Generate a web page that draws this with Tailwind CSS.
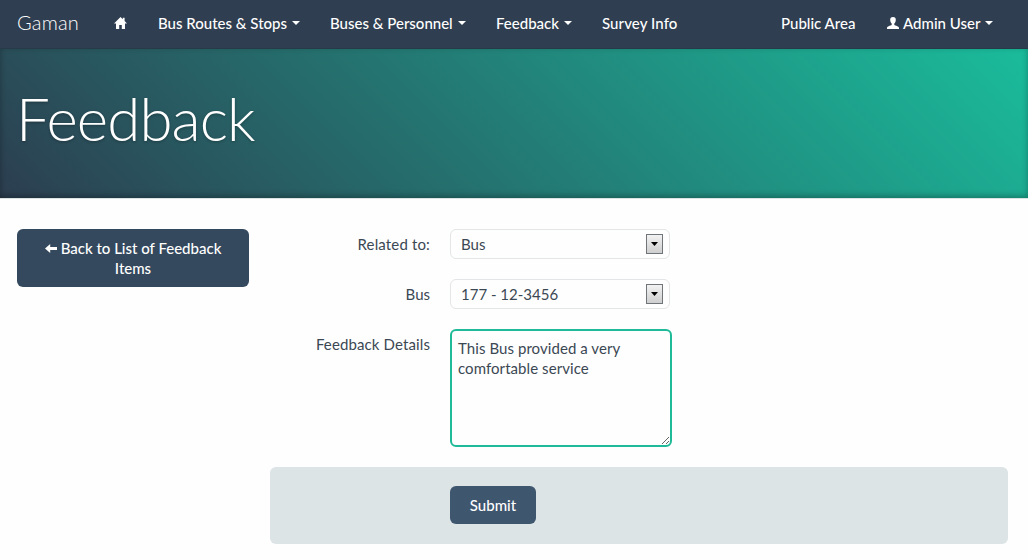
<!DOCTYPE html>
<html lang="en">
<head>
<meta charset="utf-8">
<title>Gaman - Feedback</title>
<script src="https://cdn.jsdelivr.net/npm/@tailwindcss/browser@4"></script>
</head>
<body class="bg-[#fefefe] font-['Lato',sans-serif] text-[15px] leading-5 text-[#3b4854] h-[560px] overflow-hidden">
<nav class="h-[49px] bg-[#2f3e50] border-b border-[#273a48] flex items-center text-white font-medium whitespace-nowrap">
  <a class="w-[97px] pl-[17px] text-[20px] font-light tracking-[0.2px] pb-[4px]">Gaman</a>
  <a class="w-[61px] pl-[17px] pb-[2px]">
    <svg class="w-[13px] h-[12px]" viewBox="0 0 13 12" fill="#fff"><path d="M6.5 0 0 6.600h2V12h3.200V8h2.600v4H11V6.600h2L10.600 4V.8H8.800v1.500z"/></svg>
  </a>
  <a class="w-[172px] flex items-center gap-[5px] pb-[3px]">Bus Routes &amp; Stops<span class="border-x-4 border-x-transparent border-t-4 border-t-white"></span></a>
  <a class="w-[166px] flex items-center gap-[5px] pb-[3px]">Buses &amp; Personnel<span class="border-x-4 border-x-transparent border-t-4 border-t-white"></span></a>
  <a class="w-[106px] flex items-center gap-[5px] pb-[3px]">Feedback<span class="border-x-4 border-x-transparent border-t-4 border-t-white"></span></a>
  <a class="w-[179px] pb-[3px] tracking-[0.1px]">Survey Info</a>
  <a class="w-[106px] pb-[3px]">Public Area</a>
  <a class="flex items-center pb-[3px]">
    <svg class="w-[12px] h-[12px] mr-[4px]" viewBox="0 0 12 12" fill="#fff"><path d="M6 0C4.100 0 3 1.200 3.200 3.200 3.300 4.700 4 6 4.700 6.600v1.300C3.500 8.800.2 9 0 10.800V12h12v-1.200C11.800 9 8.500 8.800 7.300 7.900V6.600C8 6 8.700 4.700 8.800 3.200 9 1.200 7.900 0 6 0z"/></svg>
    Admin User<span class="ml-[5px] border-x-4 border-x-transparent border-t-4 border-t-white"></span></a>
</nav>
<header class="h-[149px] bg-[linear-gradient(45deg,#2c3e50_0%,#1abc9c_100%)] shadow-[inset_0_-2px_6px_rgba(0,0,0,0.3),0_1px_0_#dbe3e3] pl-[16px] pt-[39px]">
  <h1 class="text-[60px] leading-[60px] font-light tracking-[-0.9px] text-white [text-shadow:0_1px_3px_rgba(0,0,0,.3)]">Feedback</h1>
</header>
<main class="flex pt-[31px] pl-[17px]">
  <aside class="w-[253px]">
    <a class="block w-[232px] h-[58px] rounded-[6px] bg-[#34495e] text-white font-medium text-center pt-[9px]"><svg class="inline w-[12px] h-[9px] mr-[4px] -mt-[3px]" viewBox="0 0 12 9" fill="#fff"><path d="M0 4.500 5.200 0v3H12v3H5.200v3z"/></svg>Back to List of Feedback<br>Items</a>
  </aside>
  <form class="w-[738px]">
    <div class="flex h-[50px]">
      <label class="w-[160px] text-right pt-[5px] mr-[20px] tracking-[0.15px]">Related to:</label>
      <div class="w-[220px] h-[30px] border border-[#e3e6e6] rounded-[6px] flex items-center justify-between pl-[10px] pr-[6px]"><span>Bus</span>
        <span class="w-[17px] h-[20px] border border-[#70757a] bg-linear-to-b from-[#f2f2f2] to-[#cfcfcf] flex items-center justify-center"><svg class="w-[7px] h-[4px]" viewBox="0 0 7 4"><path d="M0 0h7L3.500 4z"/></svg></span></div>
    </div>
    <div class="flex h-[50px]">
      <label class="w-[160px] text-right pt-[5px] mr-[20px]">Bus</label>
      <div class="w-[220px] h-[30px] border border-[#e3e6e6] rounded-[6px] flex items-center justify-between pl-[10px] pr-[6px]"><span>177 - 12-3456</span>
        <span class="w-[17px] h-[20px] border border-[#70757a] bg-linear-to-b from-[#f2f2f2] to-[#cfcfcf] flex items-center justify-center"><svg class="w-[7px] h-[4px]" viewBox="0 0 7 4"><path d="M0 0h7L3.500 4z"/></svg></span></div>
    </div>
    <div class="flex h-[138px]">
      <label class="w-[160px] text-right pt-[5px] mr-[20px] tracking-[0.12px]">Feedback Details</label>
      <div class="relative w-[222px] h-[118px] border-2 border-[#1fba98] rounded-[6px] pl-[6px] pt-[7px] tracking-[0.07px]">This Bus provided a very<br>comfortable service
        <svg class="absolute right-0 bottom-0 w-[9px] h-[9px]" viewBox="0 0 9 9" stroke="#666" stroke-width="1" fill="none"><path d="M1 8 8 1M5 8 8 5"/></svg></div>
    </div>
    <div class="h-[77px] rounded-[6px] bg-[#dce4e5] pl-[180px] pt-[19px]">
      <button class="block w-[86px] h-[38px] rounded-[6px] bg-[#3f566f] text-white font-medium">Submit</button>
    </div>
  </form>
</main>
</body>
</html>
